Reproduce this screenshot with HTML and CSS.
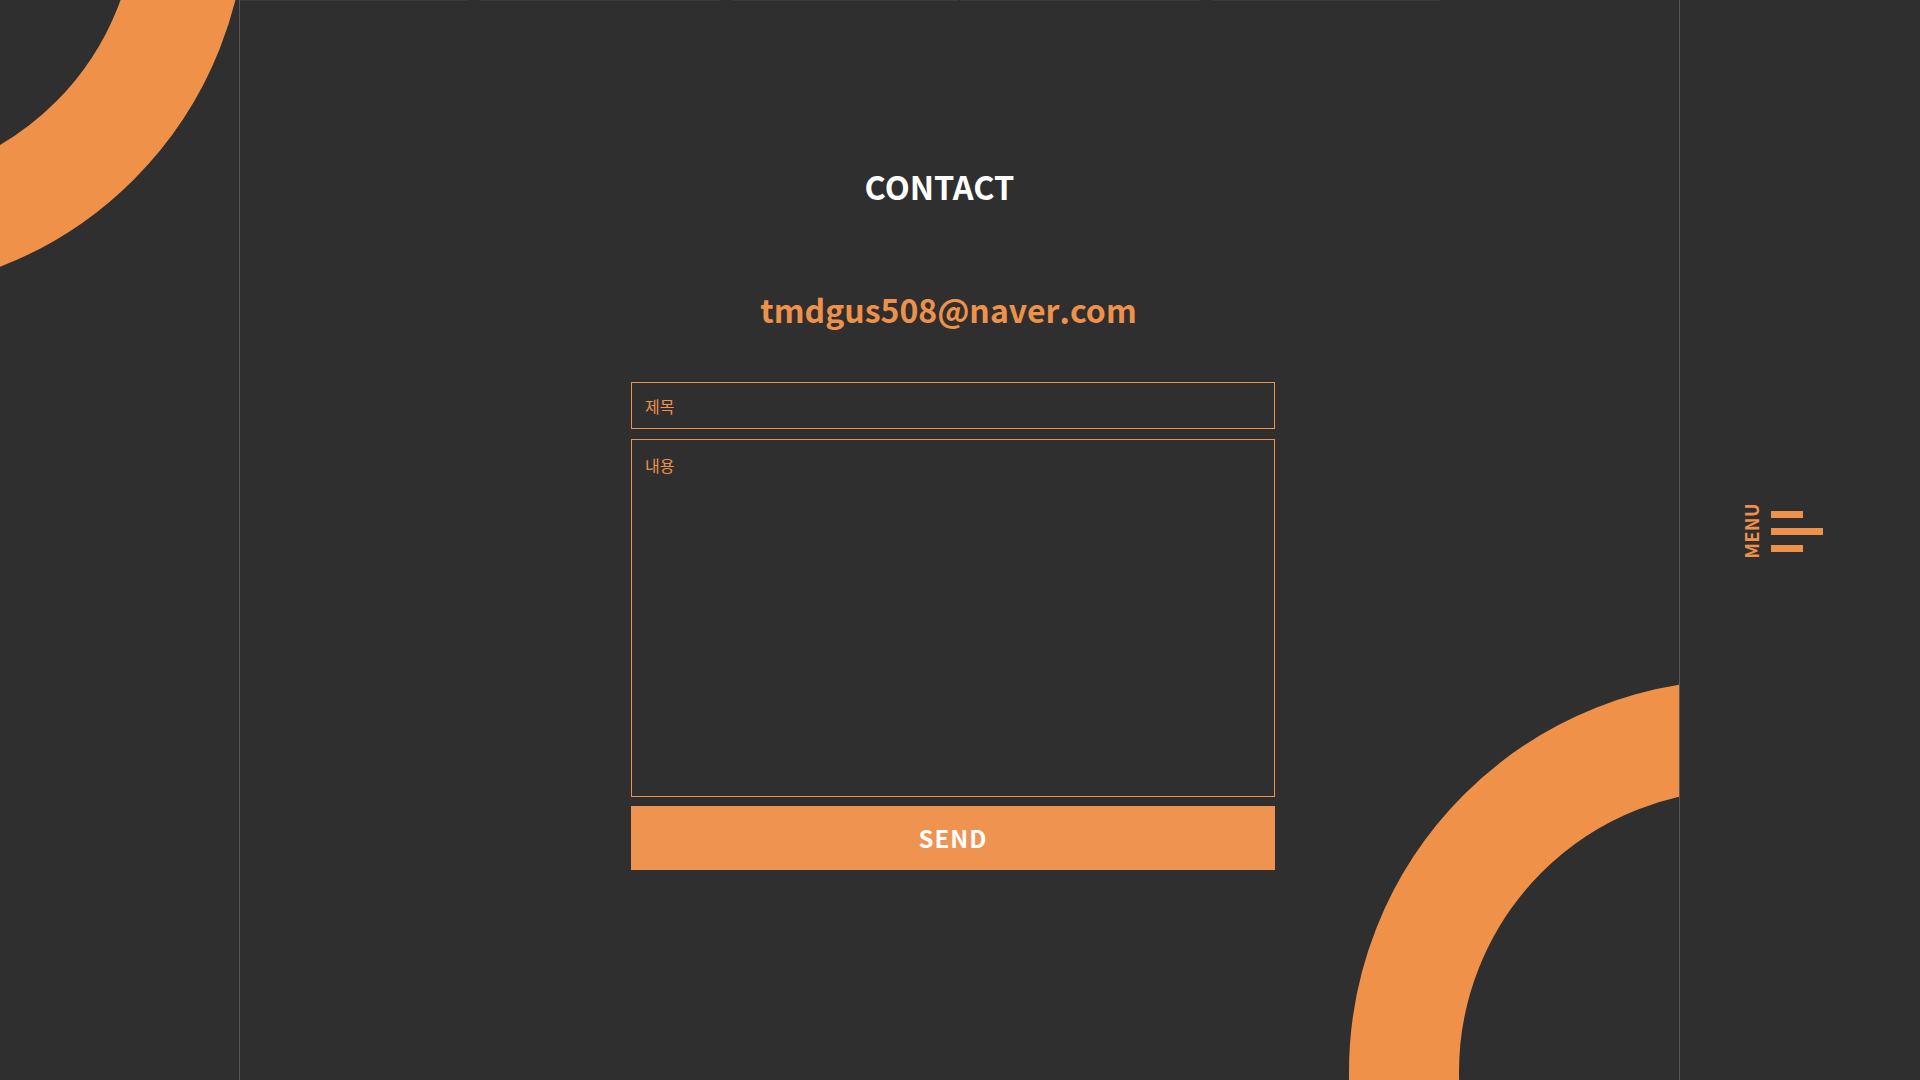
FILE: index.html
```html
<!DOCTYPE html>
<html lang="ko">
<head>
<meta charset="utf-8">
<title>Contact</title>
<link rel="stylesheet" href="styles.css">
</head>
<body>
<div class="page">
  <aside class="side side-left">
    <div class="ring ring-tl"></div>
  </aside>
  <main class="main">
    <nav class="topline">
      <span class="seg seg-1"></span>
      <span class="seg seg-2"></span>
      <span class="seg seg-3"></span>
      <span class="seg seg-4"></span>
      <span class="seg seg-5"></span>
    </nav>
    <section class="contact">
      <h1 class="title">CONTACT</h1>
      <p class="email">tmdgus508@naver.com</p>
      <form class="form">
        <input class="field" type="text" placeholder="제목">
        <textarea class="field area" placeholder="내용"></textarea>
        <button class="send" type="button">SEND</button>
      </form>
    </section>
    <div class="ring ring-br"></div>
  </main>
  <aside class="side side-right">
    <button class="menu" type="button">
      <span class="menu-label">MENU</span>
      <span class="bars">
        <span class="bar bar-short"></span>
        <span class="bar bar-long"></span>
        <span class="bar bar-short"></span>
      </span>
    </button>
  </aside>
</div>
</body>
</html>
```

FILE: styles.css
```css
* { box-sizing: border-box; }
html, body {
  margin: 0;
  padding: 0;
  background: #2f2f2f;
  overflow: hidden;
}
body {
  font-family: "Noto Sans CJK KR", "Noto Sans", sans-serif;
  color: #fff;
}
.page {
  display: flex;
  width: 1920px;
  height: 1080px;
}
.side {
  width: 240px;
  height: 1080px;
  position: relative;
  overflow: hidden;
  flex: none;
}
.side-left {
  border-right: 1px solid #575757;
}
.main {
  width: 1440px;
  height: 1080px;
  position: relative;
  overflow: hidden;
  border-right: 1px solid #575757;
  flex: none;
}
.ring {
  position: absolute;
  border-radius: 50%;
  border: 110px solid #f0914a;
}
.ring-tl {
  width: 774px;
  height: 774px;
  left: -527px;
  top: -481px;
}
.ring-br {
  width: 784px;
  height: 784px;
  left: 1109px;
  top: 680px;
}
.topline {
  display: flex;
  height: 1px;
}
.seg {
  height: 1px;
  background: #3b3b3b;
}
.seg-1 { width: 228px; margin-right: 12px; }
.seg-2 { width: 240px; margin-right: 12px; }
.seg-3 { width: 226px; margin-right: 2px; }
.seg-4 { width: 240px; margin-right: 13px; }
.seg-5 { width: 227px; }

.contact {
  display: flex;
  flex-direction: column;
  padding-top: 169px;
}
.title {
  margin: 0;
  font-size: 32.5px;
  line-height: 32px;
  font-weight: 700;
  color: #ffffff;
  text-align: center;
  padding-right: 40px;
}
.email {
  margin: 91px 0 0;
  font-size: 32px;
  line-height: 32px;
  font-weight: 700;
  color: #ee914a;
  text-align: center;
  padding-right: 22px;
}
.form {
  margin: 57px 0 0 391px;
  width: 644px;
  display: flex;
  flex-direction: column;
}
.field {
  display: block;
  width: 644px;
  height: 47px;
  margin: 0;
  padding: 0 13px;
  background: transparent;
  border: 1px solid #ee914a;
  border-radius: 0;
  outline: none;
  font-family: "Noto Sans CJK KR", sans-serif;
  font-size: 16px;
  color: #ee914a;
}
.field::placeholder {
  color: #ee914a;
  opacity: 1;
}
.area {
  height: 358px;
  margin-top: 10px;
  padding: 13px 13px;
  resize: none;
  line-height: 1.5;
}
.send {
  margin-top: 9px;
  width: 644px;
  height: 64px;
  border: none;
  border-radius: 0;
  background: #ee9350;
  color: #ffffff;
  font-family: "Noto Sans CJK KR", sans-serif;
  font-size: 24px;
  font-weight: 700;
  letter-spacing: 1px;
  padding: 0 0 2px;
}

.side-right {
  display: flex;
  align-items: center;
  justify-content: center;
}
.menu {
  display: flex;
  align-items: center;
  gap: 10px;
  background: none;
  border: none;
  padding: 0;
  margin: -18px 0 0 -37px;
  color: #ee914a;
  font-family: "Noto Sans CJK KR", sans-serif;
}
.menu-label {
  writing-mode: vertical-rl;
  transform: rotate(180deg);
  font-size: 18px;
  line-height: 20px;
  font-weight: 700;
  letter-spacing: 0.5px;
}
.bars {
  display: flex;
  flex-direction: column;
  gap: 10px;
}
.bar {
  display: block;
  height: 7px;
  background: #ee914a;
}
.bar-short { width: 32px; }
.bar-long { width: 52px; }
```
